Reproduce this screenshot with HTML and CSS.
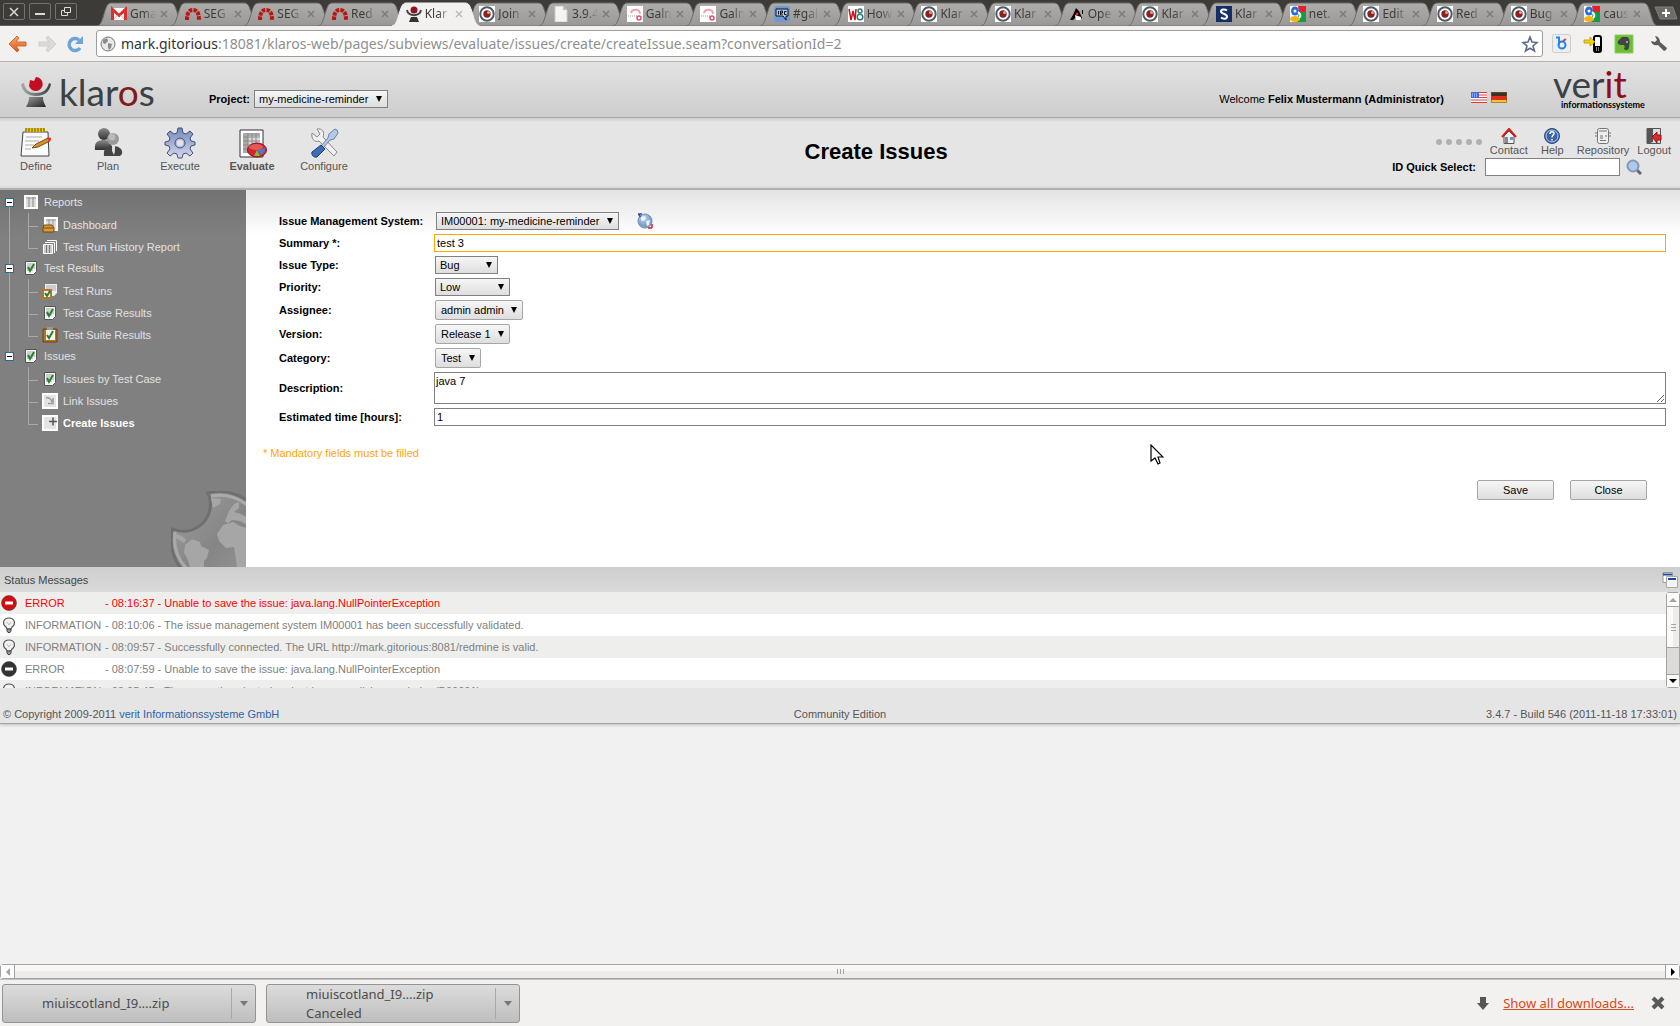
FILE: index.html
```html
<!DOCTYPE html>
<html lang="en">
<head>
  <meta charset="UTF-8">
  <title>Klaros - Create Issues</title>
  <link rel="stylesheet" href="styles.css">
</head>

<body>

  <!-- shared icon shapes -->
  <svg class="defs" width="0" height="0" aria-hidden="true">
    <defs>
      <linearGradient id="tabFill" x1="0" y1="0" x2="0" y2="1"><stop offset="0" stop-color="#aeadab"/><stop offset="1" stop-color="#999896"/></linearGradient>
      <linearGradient id="orange" x1="0" y1="0" x2="0" y2="1"><stop offset="0" stop-color="#f9a96b"/><stop offset="1" stop-color="#d9591c"/></linearGradient>
      <linearGradient id="gear" x1="0" y1="0" x2="0" y2="1"><stop offset="0" stop-color="#6f8bb8"/><stop offset="1" stop-color="#d9d6f0"/></linearGradient>
      <linearGradient id="person" x1="0" y1="0" x2="0" y2="1"><stop offset="0" stop-color="#8a8a8a"/><stop offset="1" stop-color="#303030"/></linearGradient>
      <linearGradient id="stand" x1="0" y1="0" x2="1" y2="1"><stop offset="0" stop-color="#999"/><stop offset="1" stop-color="#222"/></linearGradient>
      <linearGradient id="arms" x1="0" y1="0" x2="1" y2="0"><stop offset="0" stop-color="#a8a8a8"/><stop offset="1" stop-color="#3c4144"/></linearGradient>
      <radialGradient id="ball" cx="40%" cy="30%"><stop offset="0" stop-color="#c8d8ee"/><stop offset="1" stop-color="#7f9fc8"/></radialGradient>
      <linearGradient id="globeFill" x1="0" y1="0" x2="1" y2="1"><stop offset="0" stop-color="#a0a0a0"/><stop offset="0.5" stop-color="#858585"/><stop offset="1" stop-color="#9a9a9a"/></linearGradient>
    </defs>

    <symbol id="tab" viewBox="0 0 88 24" preserveAspectRatio="none">
      <path d="M0 24C4 23 5 19 8 9C10 3 11 1 15 1H73C77 1 78 3 80 9C83 19 84 23 88 24Z"/>
    </symbol>
    <symbol id="x" viewBox="0 0 8 8"><path d="M1 1L7 7M7 1L1 7" fill="none" stroke="currentColor" stroke-width="1.5"/></symbol>

    <symbol id="fav-gmail" viewBox="0 0 16 16"><path d="M0 2h16v12H0z" fill="#fff"/><path d="M1.500 14V3.500L8 9.500l6.500-6V14" fill="none" stroke="#d8322c" stroke-width="3"/><path d="M3 13l3.500-4M13 13L9.500 9" stroke="#e4aaa8" fill="none"/></symbol>
    <symbol id="fav-redmine" viewBox="0 0 16 16"><path d="M2 14C2 7 4 4 8 4s6 3 6 10" fill="none" stroke="#bb1512" stroke-width="4" stroke-dasharray="3.500 1"/></symbol>
    <symbol id="fav-klaros" viewBox="0 0 16 16"><path d="M1 4C2 11 14 11 15 4" fill="none" stroke="#444" stroke-width="2"/><circle cx="8" cy="4" r="3.500" fill="#8d1420"/><path d="M5 11h6l2 5H3z" fill="#333"/></symbol>
    <symbol id="fav-eye" viewBox="0 0 16 16"><path d="M0 0h16v16H0z" fill="#fff"/><circle cx="8" cy="8" r="6.700" fill="#fff" stroke="#4c5c66" stroke-width="2"/><circle cx="8" cy="8" r="3.700" fill="#8b211c"/><circle cx="9.500" cy="6.500" r="1.500" fill="#d9a49f"/></symbol>
    <symbol id="fav-page" viewBox="0 0 16 16"><path d="M2 0h8l4 4v12H2z" fill="#f4f4f4" stroke="#ccc"/><path d="M10 0v4h4z" fill="#bbb"/></symbol>
    <symbol id="fav-galn" viewBox="0 0 16 16"><path d="M0 0h16v16H0z" fill="#fff"/><path d="M4 7c1-5 9-4 9 1" fill="none" stroke="#f2a5ac" stroke-width="2"/><path d="M1 10h9" stroke="#ccc" stroke-width="2" stroke-dasharray="1 1"/><circle cx="12" cy="12" r="2" fill="none" stroke="#e0506c" stroke-width="1.500"/></symbol>
    <symbol id="fav-irc" viewBox="0 0 16 16"><rect width="16" height="16" rx="3" fill="#6f9ad3"/><path d="M2 3h12v7h-2v4l-3-4H2z" fill="#a9c8ee" stroke="#111"/><path d="M4.500 5v3.500M6.500 9V5h2v2h-2l2 2M12.500 5.500h-2v3h2" fill="none" stroke="#111"/></symbol>
    <symbol id="fav-w8" viewBox="0 0 16 16"><path d="M0 0h16v16H0z" fill="#fff"/><path d="M1 3l2 11 2-9 2 9 1-11" fill="none" stroke="#c4161c" stroke-width="1.500"/><circle cx="12" cy="5" r="2" fill="none" stroke="#2b7a7c" stroke-width="1.500"/><circle cx="12" cy="11" r="2.800" fill="none" stroke="#2b7a7c" stroke-width="1.500"/></symbol>
    <symbol id="fav-duke" viewBox="0 0 16 16"><path d="M7 2l3 3 3 7-2 1H8l-1-2-3 3H1l3-5z" fill="#000"/><path d="M6 9l3 1 3 1v3H7z" fill="#fff"/><circle cx="8" cy="8" r="1.500" fill="#e22"/><path d="M13.500 4v4" stroke="#000"/></symbol>
    <symbol id="fav-s" viewBox="0 0 16 16"><path d="M0 0h16v16H0z" fill="#152f66"/><path d="M11 4.500C9 3 5 3 5 5.500s6 2 6 5S7 13 5 11.500" fill="none" stroke="#fff" stroke-width="2"/></symbol>
    <symbol id="fav-google" viewBox="0 0 16 16"><path d="M0 0h16v16H0z" fill="#fff"/><path d="M8 0h8v6H9z" fill="#ee1c24"/><path d="M9 6h7v10H7z" fill="#149b48"/><ellipse cx="5" cy="5" rx="4" ry="4.500" fill="#2a6bd4"/><circle cx="5" cy="5" r="1.500" fill="#fff"/><ellipse cx="5" cy="13" rx="5" ry="3" fill="#f5b219"/><path d="M8 6c3 2 3 4 1 6" stroke="#fff" stroke-width="2" fill="none"/></symbol>

    <symbol id="ic-table" viewBox="0 0 16 16"><path d="M2 2h12v12H2z" fill="#ddd" stroke="#fff" stroke-width="2"/><path d="M3 4h10" stroke="#999"/><path d="M6 3v10M10 3v10" stroke="#888"/></symbol>
    <symbol id="ic-dash" viewBox="0 0 16 16"><path d="M3 1h12v12H3z" fill="#ddd" stroke="#fff" stroke-width="2"/><path d="M4 3h10M7 2v10M11 2v10" stroke="#999"/><path d="M2 8h8l2 3v4H1v-4z" fill="#d99c3c" stroke="#744806"/><path d="M2 11h9" stroke="#744806"/></symbol>
    <symbol id="ic-history" viewBox="0 0 16 16"><path d="M5 1.500h9.500V12" fill="none" stroke="#fff"/><path d="M3 3.500h9.500V14" fill="none" stroke="#fff"/><path d="M1.500 5.500h9v9h-9z" fill="#ccc" stroke="#fff"/><path d="M4.500 6v8M7.500 6v8" stroke="#777"/></symbol>
    <symbol id="ic-check" viewBox="0 0 16 16"><path d="M2.500 1.500h11v10l-3 3h-8z" fill="#f4f4f4" stroke="#555"/><path d="M4 4h8M4 6h8M4 8h8M4 10h6" stroke="#aaa"/><path d="M5 7l2 4 4-7" fill="none" stroke="#27802a" stroke-width="2"/></symbol>
    <symbol id="ic-runs" viewBox="0 0 16 16"><path d="M3 1h12v9l-3 3H3z" fill="#eee"/><path d="M4 3h10M4 5h10M4 7h10" stroke="#aaa"/><path d="M1 7h8v8H1z" fill="#f4f4f4" stroke="#b07828" stroke-width="2"/><path d="M3 10l2 3 3-5" fill="none" stroke="#27802a" stroke-width="2"/></symbol>
    <symbol id="ic-suite" viewBox="0 0 16 16"><path d="M1 2h14v13H1z" fill="#b8741a" stroke="#6e430a"/><path d="M4 3h9v10H4z" fill="#f4f4f4"/><path d="M5 0h6v3H5z" fill="#999"/><path d="M5 8l2 3 4-7" fill="none" stroke="#27802a" stroke-width="2"/></symbol>
    <symbol id="ic-link" viewBox="0 0 16 16"><path d="M1 1h14v14H1z" fill="#e4e4e4" stroke="#fff" stroke-width="2"/><path d="M4 5c3-1 5 1 6 4M11 5v5.500H6" fill="none" stroke="#999" stroke-width="1.500"/></symbol>
    <symbol id="ic-plus" viewBox="0 0 16 16"><path d="M1 1h14v14H1z" fill="#e4e4e4" stroke="#fff" stroke-width="2"/><path d="M7 6.500h8M11 2.500v8" stroke="#555" stroke-width="1.500"/></symbol>
    <symbol id="ic-bulb" viewBox="0 0 16 16"><path d="M5 10C1 7 2 1 8 1s7 6 3 9l-1 2H6z" fill="#f2f2f2" stroke="#555" stroke-width="1.200"/><path d="M6 5l2 3 2-3" fill="none" stroke="#bbb"/><path d="M6 12h4v2l-1 1.500H7L6 14z" fill="#999" stroke="#444"/></symbol>
    <symbol id="ic-stop" viewBox="0 0 16 16"><circle cx="8" cy="8" r="7.500" fill="currentColor" stroke="#333" stroke-opacity="0.5"/><path d="M4 6.500h8v3H4z" fill="#fff"/></symbol>
  </svg>

  <!-- tab strip -->
  <div class="tabstrip">
    <div class="win-buttons">
      <button type="button" aria-label="Close window"><svg width="10" height="10" viewBox="0 0 10 10"><path d="M1 1l8 8M9 1l-8 8" stroke="#dfdbd2" stroke-width="1.500"/></svg></button>
      <button type="button" aria-label="Minimize"><svg width="10" height="10" viewBox="0 0 10 10"><path d="M0 7h10" stroke="#dfdbd2" stroke-width="2"/></svg></button>
      <button type="button" aria-label="Restore"><svg width="10" height="10" viewBox="0 0 10 10"><path d="M3.500 .5h6v5h-6zM3 3.500H.500v5h6V6" fill="none" stroke="#dfdbd2"/></svg></button>
    </div>
    <div class="tabs">
      <a class="tab" href="#"><svg class="shape"><use href="#tab"/></svg><svg class="fav"><use href="#fav-gmail"/></svg><span>Gma</span><svg class="x"><use href="#x"/></svg></a>
      <a class="tab" href="#"><svg class="shape"><use href="#tab"/></svg><svg class="fav"><use href="#fav-redmine"/></svg><span>SEG</span><svg class="x"><use href="#x"/></svg></a>
      <a class="tab" href="#"><svg class="shape"><use href="#tab"/></svg><svg class="fav"><use href="#fav-redmine"/></svg><span>SEG</span><svg class="x"><use href="#x"/></svg></a>
      <a class="tab" href="#"><svg class="shape"><use href="#tab"/></svg><svg class="fav"><use href="#fav-redmine"/></svg><span>Red</span><svg class="x"><use href="#x"/></svg></a>
      <a class="tab active" href="#"><svg class="shape"><use href="#tab"/></svg><svg class="fav"><use href="#fav-klaros"/></svg><span>Klar</span><svg class="x"><use href="#x"/></svg></a>
      <a class="tab" href="#"><svg class="shape"><use href="#tab"/></svg><svg class="fav"><use href="#fav-eye"/></svg><span>Join</span><svg class="x"><use href="#x"/></svg></a>
      <a class="tab" href="#"><svg class="shape"><use href="#tab"/></svg><svg class="fav"><use href="#fav-page"/></svg><span>3.9.4</span><svg class="x"><use href="#x"/></svg></a>
      <a class="tab" href="#"><svg class="shape"><use href="#tab"/></svg><svg class="fav"><use href="#fav-galn"/></svg><span>Galn</span><svg class="x"><use href="#x"/></svg></a>
      <a class="tab" href="#"><svg class="shape"><use href="#tab"/></svg><svg class="fav"><use href="#fav-galn"/></svg><span>Galn</span><svg class="x"><use href="#x"/></svg></a>
      <a class="tab" href="#"><svg class="shape"><use href="#tab"/></svg><svg class="fav"><use href="#fav-irc"/></svg><span>#gal</span><svg class="x"><use href="#x"/></svg></a>
      <a class="tab" href="#"><svg class="shape"><use href="#tab"/></svg><svg class="fav"><use href="#fav-w8"/></svg><span>How</span><svg class="x"><use href="#x"/></svg></a>
      <a class="tab" href="#"><svg class="shape"><use href="#tab"/></svg><svg class="fav"><use href="#fav-eye"/></svg><span>Klar</span><svg class="x"><use href="#x"/></svg></a>
      <a class="tab" href="#"><svg class="shape"><use href="#tab"/></svg><svg class="fav"><use href="#fav-eye"/></svg><span>Klar</span><svg class="x"><use href="#x"/></svg></a>
      <a class="tab" href="#"><svg class="shape"><use href="#tab"/></svg><svg class="fav"><use href="#fav-duke"/></svg><span>Ope</span><svg class="x"><use href="#x"/></svg></a>
      <a class="tab" href="#"><svg class="shape"><use href="#tab"/></svg><svg class="fav"><use href="#fav-eye"/></svg><span>Klar</span><svg class="x"><use href="#x"/></svg></a>
      <a class="tab" href="#"><svg class="shape"><use href="#tab"/></svg><svg class="fav"><use href="#fav-s"/></svg><span>Klar</span><svg class="x"><use href="#x"/></svg></a>
      <a class="tab" href="#"><svg class="shape"><use href="#tab"/></svg><svg class="fav"><use href="#fav-google"/></svg><span>net.</span><svg class="x"><use href="#x"/></svg></a>
      <a class="tab" href="#"><svg class="shape"><use href="#tab"/></svg><svg class="fav"><use href="#fav-eye"/></svg><span>Edit</span><svg class="x"><use href="#x"/></svg></a>
      <a class="tab" href="#"><svg class="shape"><use href="#tab"/></svg><svg class="fav"><use href="#fav-eye"/></svg><span>Red</span><svg class="x"><use href="#x"/></svg></a>
      <a class="tab" href="#"><svg class="shape"><use href="#tab"/></svg><svg class="fav"><use href="#fav-eye"/></svg><span>Bug</span><svg class="x"><use href="#x"/></svg></a>
      <a class="tab" href="#"><svg class="shape"><use href="#tab"/></svg><svg class="fav"><use href="#fav-google"/></svg><span>caus</span><svg class="x"><use href="#x"/></svg></a>
    </div>
    <button type="button" class="new-tab" aria-label="New tab"><svg width="24" height="14" viewBox="0 0 24 14"><path d="M1 1h18l4 12H6z" fill="#6d6c69" stroke="#807f7b"/><path d="M12 3v8M8 7h8" stroke="#fff" stroke-width="2"/></svg></button>
  </div>

  <!-- toolbar -->
  <div class="toolbar">
    <button type="button" class="tool" aria-label="Back"><svg width="20" height="18" viewBox="0 0 20 18"><path d="M1 9l8-8 2 2-3 4h10v4H8l3 4-2 2z" fill="url(#orange)" stroke="#cf6a35"/></svg></button>
    <button type="button" class="tool" aria-label="Forward"><svg width="20" height="18" viewBox="0 0 20 18"><path d="M19 9l-8-8-2 2 3 4H2v4h10l-3 4 2 2z" fill="#dcdad8" stroke="#cfcdcb"/></svg></button>
    <button type="button" class="tool" aria-label="Reload"><svg width="18" height="18" viewBox="0 0 18 18"><path d="M14 13a6 6 0 1 1-1-8" fill="none" stroke="#6fa3d8" stroke-width="3.500"/><path d="M17 1v8H9z" fill="#6fa3d8"/></svg></button>
    <div class="omnibox">
      <svg width="16" height="16" viewBox="0 0 16 16"><circle cx="8" cy="8" r="7" fill="#e8e8e8" stroke="#777"/><path d="M3 4l4-2 1 3-3 3-2-1zM8 7l4 1-1 4-2 2-1-3z" fill="#8a8a8a"/></svg>
      <div class="url"><b>mark.gitorious</b>:18081/klaros-web/pages/subviews/evaluate/issues/create/createIssue.seam?conversationId=2</div>
      <svg width="18" height="18" viewBox="0 0 18 18"><path d="M9 2l2 5 5 .5-4 3.500 1.500 5L9 13.200 4.500 16 6 11 2 7.500 7 7z" fill="#fff" stroke="#5f6b86" stroke-width="1.600"/></svg>
    </div>
    <div class="extensions">
      <svg width="20" height="20" viewBox="0 0 20 20"><rect x=".5" y=".5" width="18" height="18" rx="2" fill="#eee" stroke="#ccc"/><path d="M4 3.500h3V11" fill="none" stroke="#1e88e5" stroke-width="2"/><circle cx="10" cy="11" r="3.500" fill="none" stroke="#1e88e5" stroke-width="2"/><path d="M11 7l3-2" stroke="#e33" stroke-width="2"/></svg>
      <svg width="20" height="20" viewBox="0 0 20 20"><rect x="11" y="2" width="7" height="16" rx="2" fill="#fff" stroke="#000" stroke-width="2"/><path d="M11 12h7v6h-7z" fill="#000"/><path d="M13 14h1M15 14h1M13 16h1M15 16h1" stroke="#fff"/><path d="M1 6h6V3l5 5-5 4V9H1z" fill="#f7d40a" stroke="#a98e00" stroke-width=".7"/></svg>
      <svg width="20" height="20" viewBox="0 0 20 20"><path d="M1 1h18v18H1z" fill="#6abf36" stroke="#8bce60"/><path d="M4 7l4-4h5c3 1 3 5 2 10 0 4-5 4-5 1l1-1-1-2H8c-3 0-5-1-4-4z" fill="#444"/><circle cx="13" cy="8" r="1" fill="#bbb"/></svg>
      <svg class="wrench" width="18" height="18" viewBox="0 0 18 18"><path d="M1 6c1 4 4 5 7 4l6 6 2-1 1-2-7-6c0-3-2-6-5-6l2 4-2 2z" fill="#5c5b58"/></svg>
    </div>
  </div>

  <div class="page">

    <!-- brand header -->
    <header class="brand">
      <svg class="klaros-logo" width="150" height="38" viewBox="0 0 150 38" role="img" aria-label="klaros">
        <path d="M2 8C3 15 8 20 17 20S31 15 32 8l-2-1C28 14 24 17 17 17S6 14 5 7z" fill="url(#arms)"/>
        <path d="M10 21h14c0 4 1 6 3 10H7c2-4 3-6 3-10z" fill="url(#stand)"/>
        <path d="M11 4l4 1 2-4a7 7 0 1 1-7 9z" fill="#c00f1f"/>
        <text x="40" y="30" class="logo-text">klar<tspan fill="#7e1c1c">o</tspan>s</text>
      </svg>
      <div class="project">
        <label for="project">Project:</label>
        <span class="select"><select id="project"><option>my-medicine-reminder</option></select></span>
      </div>
      <div class="welcome">Welcome <b>Felix Mustermann (Administrator)</b></div>
      <div class="flags">
        <a href="#" aria-label="English"><svg width="16" height="11" viewBox="0 0 16 11"><path d="M0 0h16v11H0z" fill="#fff"/><path d="M0 .5h16M0 3h16M0 5.500h16M0 8h16M0 10.500h16" stroke="#e33a36"/><path d="M0 0h8v6H0z" fill="#3e6fd9"/><path d="M1 2h6M1 4h6" stroke="#cfe0ff" stroke-dasharray="1 1"/></svg></a>
        <a href="#" aria-label="Deutsch"><svg width="16" height="11" viewBox="0 0 16 11"><path d="M0 0h16v4H0z" fill="#3c3222"/><path d="M0 4h16v4H0z" fill="#e32d1c"/><path d="M0 8h16v3H0z" fill="#f0c83c"/><path d="M.5.5h15v10H.5z" fill="none" stroke="#765c1c" stroke-opacity=".6"/></svg></a>
      </div>
      <svg class="verit-logo" width="98" height="44" viewBox="0 0 98 44" role="img" aria-label="verit informationssysteme">
        <text x="0" y="30" class="logo-text">ver<tspan fill="#8f0f16">it</tspan></text>
        <text x="8" y="40" class="logo-sub">informationssysteme</text>
      </svg>
    </header>

    <!-- main navigation -->
    <div class="navbar">
      <nav class="modules">
        <a href="#"><svg width="32" height="32" viewBox="0 0 32 32"><path d="M3 5h25l1 24H1z" fill="#fafafa" stroke="#444"/><path d="M5 1h20v4H5z" fill="#e9c71b"/><path d="M6 1v4M9 1v4M12 1v4M15 1v4M18 1v4M21 1v4M24 1v4" stroke="#6b5600"/><path d="M6 10h16M5 14h14M5 18h9M5 22h6" stroke="#aaa"/><path d="M12 21l4-4 12-6 2 3-12 6z" fill="#d7902c" stroke="#7a4d10"/><path d="M28 10l3 1v2l-2 2-2-4z" fill="#e33"/></svg>Define</a>
        <a href="#"><svg width="32" height="32" viewBox="0 0 32 32"><circle cx="12" cy="7" r="6" fill="url(#person)"/><path d="M3 23c-1-8 3-10 9-10s8 3 8 10z" fill="url(#person)"/><path d="M12 29c-1-8 3-10 9-10s10 3 9 8l-2 2z" fill="#444"/><circle cx="21" cy="12" r="6" fill="#999"/><circle cx="20" cy="10" r="3.500" fill="#bbb"/><path d="M20 19h3l0 5-1 4-2-4z" fill="#ddd"/></svg>Plan</a>
        <a href="#"><svg width="32" height="32" viewBox="0 0 32 32"><path d="M14 1h4l1 5 3 1 4-3 3 3-3 4 1 3 4 1v3l-4 1-1 3 3 4-3 3-4-3-3 1-1 4h-4l-1-4-3-1-4 3-3-3 3-4-1-3-4-1v-3l4-1 1-3-3-4 3-3 4 3 3-1z" fill="url(#gear)" stroke="#464f7c"/><circle cx="16" cy="16" r="5" fill="#b9bcdc" stroke="#464f7c"/><circle cx="16" cy="16" r="3" fill="#e5e5e5"/></svg>Execute</a>
        <a class="current" href="#"><svg width="32" height="32" viewBox="0 0 32 32"><path d="M4 3h23v27H4z" fill="#fff" stroke="#333"/><path d="M7 6h17v20H7z" fill="#ddd"/><path d="M7 6h5v20H7zM7 6h17v3H7z" fill="#aaa"/><path d="M7 10h17M7 14h17M7 18h17M7 22h17M12 6v20M16 6v20M20 6v20" stroke="#888"/><ellipse cx="21" cy="23" rx="9.500" ry="7" fill="#d8232a" stroke="#8a1015"/><path d="M21 23l8-2c0 4-1 5-4 7z" fill="#4a7ac8"/><path d="M21 23l3 6h-6z" fill="#7ac142"/><ellipse cx="20" cy="20" rx="7" ry="3" fill="#ee7b7c" opacity=".6"/></svg>Evaluate</a>
        <a href="#"><svg width="32" height="32" viewBox="0 0 32 32"><path d="M4 6l5 4 3-3-3-5c5-1 8 3 6 8l14 15-3 4-15-15C6 16 3 11 4 6z" fill="#f0f0f0" stroke="#888"/><path d="M29 3l-2-1-6 5-1 4-7 8 2 2 7-8 4-1 4-6z" fill="#b6c9e4" stroke="#6681a8"/><path d="M13 18l4 4-8 8c-3 1-6-2-5-5z" fill="#3d6db5" stroke="#1f3d78"/></svg>Configure</a>
      </nav>
      <h1>Create Issues</h1>
      <div class="tools">
        <div class="tool-links">
          <div class="dots"><i></i><i></i><i></i><i></i><i></i></div>
          <a href="#"><svg width="16" height="16" viewBox="0 0 16 16"><path d="M3 8v7.500h10V8L8 3z" fill="#eee" stroke="#555"/><path d="M1 9l7-8 7 8" fill="none" stroke="#cf1b1b" stroke-width="2"/><path d="M4 9h3v6H4z" fill="#888"/><path d="M9 9h3v3H9z" fill="#6b93c9"/></svg>Contact</a>
          <a href="#"><svg width="16" height="16" viewBox="0 0 16 16"><circle cx="8" cy="8" r="7.500" fill="#3a64a8" stroke="#2a4680"/><circle cx="8" cy="8" r="6" fill="none" stroke="#b9cbe6"/><path d="M6 6c0-3 4-3 4-.5C10 7 8 7 8 9.500M8 11v1.500" fill="none" stroke="#fff" stroke-width="1.500"/></svg>Help</a>
          <a href="#"><svg width="16" height="16" viewBox="0 0 16 16"><rect x="2.500" y=".5" width="11" height="15" rx="2" fill="#eee" stroke="#777"/><path d="M4 3h8M5 8h3M10 8h2M5 10h3M5 12.500h6M0 5h2M0 8h2M14 5h2M14 8h2" stroke="#777"/></svg>Repository</a>
          <a href="#"><svg width="16" height="16" viewBox="0 0 16 16"><path d="M1 .5h13.500v15H1z" fill="#ddd" stroke="#555"/><path d="M1 1h6v13l-3 1H1z" fill="#555"/><path d="M6 9l5-5v3h4v5h-4v3z" fill="#d62b30" stroke="#9c1317"/></svg>Logout</a>
        </div>
        <form class="quick">
          <label for="quick">ID Quick Select:</label>
          <input type="text" id="quick">
          <button type="button" class="icon-btn" aria-label="Search"><svg width="16" height="16" viewBox="0 0 16 16"><path d="M11 11l4 4" stroke="#666" stroke-width="3"/><circle cx="7" cy="7" r="5.500" fill="#a9cbf2" stroke="#8a98ac" stroke-width="2"/></svg></button>
        </form>
      </div>
    </div>

    <div class="body">

      <!-- tree menu -->
      <aside class="sidebar">
        <ul class="tree">
          <li>
            <a class="group" href="#"><i class="toggle"></i><svg><use href="#ic-table"/></svg>Reports</a>
            <ul>
              <li><a href="#"><svg><use href="#ic-dash"/></svg>Dashboard</a></li>
              <li><a href="#"><svg><use href="#ic-history"/></svg>Test Run History Report</a></li>
            </ul>
          </li>
          <li>
            <a class="group" href="#"><i class="toggle"></i><svg><use href="#ic-check"/></svg>Test Results</a>
            <ul>
              <li><a href="#"><svg><use href="#ic-runs"/></svg>Test Runs</a></li>
              <li><a href="#"><svg><use href="#ic-check"/></svg>Test Case Results</a></li>
              <li><a href="#"><svg><use href="#ic-suite"/></svg>Test Suite Results</a></li>
            </ul>
          </li>
          <li>
            <a class="group" href="#"><i class="toggle"></i><svg><use href="#ic-check"/></svg>Issues</a>
            <ul>
              <li><a href="#"><svg><use href="#ic-check"/></svg>Issues by Test Case</a></li>
              <li><a href="#"><svg><use href="#ic-link"/></svg>Link Issues</a></li>
              <li><a class="selected" href="#"><svg><use href="#ic-plus"/></svg>Create Issues</a></li>
            </ul>
          </li>
        </ul>
        <svg class="globe" width="75" height="76" viewBox="0 0 75 76">
          <path d="M37 2A48 48 0 1 1 1.500 38A27 27 0 0 0 37 2z" fill="url(#globeFill)" stroke="#6f6f6f" stroke-width="3"/>
          <path d="M40 5A45 45 0 0 1 76 14M4 41A45 45 0 0 0 16 78" fill="none" stroke="#aaa" stroke-width="3"/>
          <path d="M40 7l10 1-1 5-7 4zM5 43l6 2 4 4-2 3-8-5zM14 54l7-6 8 3 1 4 8 4-2 8-3 3v6H19l-2-7-4-7zM58 20l5-7 5-2v6l-5 4 7 2 5 3v7l-6-3-8-1-4 3-3-2zM52 34l10-3 7 4 6 2v39h-9l-3-20-8 1-7-7-2-7z" fill="#a6a6a6"/>
        </svg>
      </aside>

      <!-- issue form -->
      <main class="content">
        <form class="issue">
          <label for="ims">Issue Management System:</label>
          <div class="field ims">
            <span class="select"><select id="ims"><option>IM00001: my-medicine-reminder</option></select></span>
            <button type="button" class="icon-btn" aria-label="Validate"><svg width="16" height="16" viewBox="0 0 16 16"><circle cx="8" cy="8" r="7" fill="url(#ball)" stroke="#6f8fb5"/><path d="M4 4l4-1 1 3-3 2-2-1zM9 8l4-1-1 5-2 1z" fill="#eef4fb"/><path d="M1 1h4M1.500 1l2 3" stroke="#2f4f9c" stroke-width="1.500"/><path d="M11 15h4M15 11v4" fill="none" stroke="#d0202a" stroke-width="1.500"/></svg></button>
          </div>

          <label for="summary">Summary *:</label>
          <input type="text" id="summary" class="required" value="test 3">

          <label for="type">Issue Type:</label>
          <div class="field"><span class="select type"><select id="type"><option>Bug</option></select></span></div>

          <label for="priority">Priority:</label>
          <div class="field"><span class="select priority"><select id="priority"><option>Low</option></select></span></div>

          <label for="assignee">Assignee:</label>
          <div class="field"><span class="select soft"><select id="assignee"><option>admin admin</option></select></span></div>

          <label for="version">Version:</label>
          <div class="field"><span class="select soft"><select id="version"><option>Release 1</option></select></span></div>

          <label for="category">Category:</label>
          <div class="field"><span class="select soft"><select id="category"><option>Test</option></select></span></div>

          <label for="description">Description:</label>
          <textarea id="description">java 7</textarea>

          <label for="time">Estimated time [hours]:</label>
          <input type="text" id="time" value="1">
        </form>

        <p class="mandatory">* Mandatory fields must be filled</p>

        <div class="actions">
          <button type="button">Save</button>
          <button type="button">Close</button>
        </div>

        <svg class="cursor" width="14" height="22" viewBox="0 0 14 22"><path d="M1 1v16l4-3 3 6 2-1-2-6h5z" fill="#fff" stroke="#000" stroke-width="1.200"/></svg>
      </main>
    </div>

    <!-- status messages -->
    <section class="status">
      <div class="status-head">
        <h2>Status Messages</h2>
        <button type="button" class="icon-btn" aria-label="Open in window"><svg width="16" height="16" viewBox="0 0 16 16"><path d="M1 .5h9.500v10H1z" fill="#fff" stroke="#999"/><path d="M1 2.500h9" stroke="#1f4a94" stroke-width="2"/><path d="M4.500 4.500h11v11h-11z" fill="#f4f4f4" stroke="#aaa"/><path d="M6 7h8" stroke="#1f4a94" stroke-width="2"/></svg></button>
      </div>
      <div class="status-body">
        <ul class="messages">
          <li class="new"><svg><use href="#ic-stop"/></svg><span>ERROR</span>- 08:16:37 - Unable to save the issue: java.lang.NullPointerException</li>
          <li><svg><use href="#ic-bulb"/></svg><span>INFORMATION</span>- 08:10:06 - The issue management system IM00001 has been successfully validated.</li>
          <li><svg><use href="#ic-bulb"/></svg><span>INFORMATION</span>- 08:09:57 - Successfully connected. The URL http://mark.gitorious:8081/redmine is valid.</li>
          <li class="old-error"><svg><use href="#ic-stop"/></svg><span>ERROR</span>- 08:07:59 - Unable to save the issue: java.lang.NullPointerException</li>
          <li><svg><use href="#ic-bulb"/></svg><span>INFORMATION</span>- 08:05:45 - The currently selected project is my-medicine-reminder (P00001).</li>
        </ul>
        <div class="vscroll">
          <i class="btn up"></i>
          <i class="thumb"></i>
          <i class="track"></i>
          <i class="btn down"></i>
        </div>
      </div>
    </section>

    <footer class="footer">
      <span>© Copyright 2009-2011 <a href="#">verit Informationssysteme GmbH</a></span>
      <span>Community Edition</span>
      <span>3.4.7 - Build 546 (2011-11-18 17:33:01)</span>
    </footer>
  </div>

  <div class="hscroll">
    <i class="btn left"></i>
    <i class="thumb"></i>
    <i class="btn right"></i>
  </div>

  <!-- downloads -->
  <div class="downloads">
    <div class="download">
      <button type="button" class="file">miuiscotland_I9….zip</button>
      <button type="button" class="more" aria-label="Options"></button>
    </div>
    <div class="download">
      <button type="button" class="file">miuiscotland_I9….zip<br>Canceled</button>
      <button type="button" class="more" aria-label="Options"></button>
    </div>
    <div class="show-all">
      <svg width="12" height="13" viewBox="0 0 12 13"><path d="M3 0h6v6h3l-6 7-6-7h3z" fill="#555"/></svg>
      <a href="#">Show all downloads...</a>
      <button type="button" class="icon-btn" aria-label="Close downloads"><svg width="14" height="14" viewBox="0 0 14 14"><path d="M2 2l10 10M12 2l-10 10" stroke="#5a5a58" stroke-width="4"/></svg></button>
    </div>
  </div>

</body>
</html>
```
FILE: styles.css
```css
* {
  box-sizing: border-box;
}

body {
  display: flex;
  flex-direction: column;
  min-height: 100vh;
  margin: 0;
  font-family: "Liberation Sans", Arial, sans-serif;
  font-size: 11px;
  color: #000;
  background: #f1f1f1;
}

a {
  color: inherit;
  text-decoration: none;
}

ul {
  list-style: none;
  margin: 0;
  padding: 0;
}

button, input, select, textarea {
  font: inherit;
  color: inherit;
  margin: 0;
}

svg {
  display: block;
  flex: none;
}

.defs {
  position: absolute;
}

.icon-btn, .tool, .new-tab {
  padding: 0;
  border: none;
  background: none;
}

/* tab strip */
.tabstrip {
  display: flex;
  height: 26px;
  background: #3c3b37;
  border-bottom: 1px solid #62615e;
  font-family: "Noto Sans", sans-serif;
  font-size: 12px;
}

.win-buttons {
  display: flex;
  gap: 4px;
  padding: 3px 27px 0 3px;
}

.win-buttons button {
  display: flex;
  align-items: center;
  justify-content: center;
  width: 22px;
  height: 17px;
  padding: 0;
  border: 1px solid #73726c;
  border-radius: 2px;
  background: #3c3b37;
}

.tabs {
  display: flex;
  flex: 1;
  padding-top: 2px;
}

.tab {
  position: relative;
  display: flex;
  flex: 1;
  align-items: center;
  padding-left: 7px;
  min-width: 0;
  color: #3c3b37;
}

.tab .shape {
  position: absolute;
  left: -7px;
  top: 0;
  width: calc(100% + 14px);
  height: 24px;
  overflow: visible;
  fill: url(#tabFill);
  stroke: #6b6a67;
}

.tab.active {
  z-index: 1;
}

.tab.active .shape {
  fill: #f2f1f0;
  stroke: #f2f1f0;
}

.tab .fav {
  position: relative;
  width: 16px;
  height: 16px;
}

.tab span {
  position: relative;
  width: 26px;
  margin-left: 3px;
  overflow: hidden;
  white-space: nowrap;
  -webkit-mask-image: linear-gradient(to right, #000 50%, transparent);
  mask-image: linear-gradient(to right, #000 50%, transparent);
}

.tab .x {
  position: relative;
  width: 8px;
  height: 8px;
  margin-left: 4px;
  color: #7d7c79;
}

.tab.active .x {
  color: #bbb;
}

.new-tab {
  width: 29px;
  padding: 0 2px 0 3px;
}

/* toolbar */
.toolbar {
  display: flex;
  align-items: center;
  height: 36px;
  padding-left: 8px;
  background: #f2f1f0;
  border-bottom: 1px solid #b6b4b2;
}

.tool {
  margin-right: 9px;
}

.omnibox {
  display: flex;
  flex: 1;
  align-items: center;
  height: 27px;
  padding: 0 3px;
  margin-left: 3px;
  border: 1px solid #a09d9a;
  border-radius: 3px;
  background: #fff;
}

.url {
  flex: 1;
  padding-left: 5px;
  font-family: "Noto Sans", sans-serif;
  font-size: 14px;
  color: #8f8f8f;
}

.url b {
  font-weight: normal;
  color: #333;
}

.extensions {
  display: flex;
  align-items: center;
  gap: 11px;
  padding: 0 12px 0 9px;
}

.wrench {
  margin-left: 5px;
}

/* brand header */
.page {
  flex: 1;
}

.brand {
  display: flex;
  align-items: flex-end;
  height: 56px;
  padding: 0 29px 9px 19px;
  background: linear-gradient(#e3e3e3, #cdcdcd);
  border-bottom: 1px solid #a5a5a5;
}

.logo-text {
  font-family: Lato, sans-serif;
  font-size: 37px;
  fill: #3c4144;
}

.logo-sub {
  font-family: Lato, sans-serif;
  font-size: 9px;
  font-weight: bold;
}

.klaros-logo {
  margin-bottom: -6px;
}

.verit-logo {
  margin-bottom: -4px;
  overflow: visible;
}

.project {
  display: flex;
  align-items: center;
  gap: 4px;
  margin-left: 40px;
}

label {
  font-weight: bold;
}

.welcome {
  margin-left: auto;
  line-height: 18px;
}

.flags {
  display: flex;
  gap: 4px;
  margin: 0 46px 5px 27px;
}

/* drop-downs */
.select {
  position: relative;
  display: inline-block;
}

.select select {
  display: block;
  width: 100%;
  height: 18px;
  padding: 0 18px 0 4px;
  border: 1px solid #808080;
  border-radius: 0;
  background: linear-gradient(#f6f6f6, #dedede);
  appearance: none;
  -webkit-appearance: none;
}

.select::after {
  content: "";
  position: absolute;
  right: 6px;
  top: 6px;
  border: 3px solid transparent;
  border-top: 6px solid #000;
  border-bottom: none;
}

.select.soft select {
  height: 20px;
  padding-left: 5px;
  border-color: #a6a6a6;
  border-radius: 2px;
}

.select.soft::after {
  top: 7px;
}

.select.type {
  width: 63px;
}

.select.priority {
  width: 75px;
}

/* module navigation */
.navbar {
  display: flex;
  height: 72px;
  background: linear-gradient(#cfcfcf, #e5e5e5 4px, #e5e5e5 67px, #d8d8d8);
  border-bottom: 2px solid #b0b0b0;
  color: #555;
}

.modules {
  display: flex;
  padding-top: 9px;
}

.modules a {
  display: flex;
  flex-direction: column;
  align-items: center;
  gap: 1px;
  width: 72px;
}

.modules .current {
  font-weight: bold;
}

.navbar h1 {
  flex: 1;
  margin: 21px 0 0;
  font-size: 22px;
  line-height: 26px;
  text-align: center;
  color: #000;
}

.tools {
  padding: 10px 9px 0 0;
}

.tool-links {
  display: flex;
  justify-content: flex-end;
  gap: 8px;
}

.tool-links a {
  display: flex;
  flex-direction: column;
  align-items: center;
  min-width: 33px;
}

.dots {
  display: flex;
  gap: 4px;
  padding-top: 11px;
}

.dots i {
  width: 6px;
  height: 6px;
  border-radius: 50%;
  background: #b0b0b0;
}

.quick {
  display: flex;
  align-items: center;
  gap: 6px;
  margin-top: 2px;
  padding-right: 29px;
  color: #000;
}

.quick input {
  width: 135px;
  margin-left: 3px;
}

input[type="text"], textarea {
  height: 18px;
  padding: 0 2px;
  border: 1px solid #808080;
  background: #fff;
}

/* tree menu */
.body {
  display: flex;
  min-height: 377px;
}

.sidebar {
  position: relative;
  width: 246px;
  background: linear-gradient(#727272, #808080 46px);
  color: #e2e2e2;
}

.tree {
  padding-top: 1px;
}

.tree > li {
  position: relative;
}

.tree a {
  display: flex;
  align-items: center;
  height: 22px;
}

.tree svg {
  width: 16px;
  height: 16px;
}

.tree .group {
  padding-left: 5px;
}

.group svg {
  margin: 0 5px 0 9px;
}

.toggle {
  position: relative;
  z-index: 1;
  width: 9px;
  height: 9px;
  border: 1px solid #1f6f94;
  background: linear-gradient(#000, #000) center / 5px 1px no-repeat #fff;
}

/* line between the group toggles */
.tree > li:not(:last-child)::before {
  content: "";
  position: absolute;
  left: 9px;
  top: 11px;
  bottom: -11px;
  border-left: 1px solid #a8a8a8;
}

.tree ul {
  padding-left: 28px;
}

.tree ul li {
  position: relative;
}

.tree ul li::before {
  content: "";
  position: absolute;
  left: 0;
  top: 0;
  width: 9px;
  height: 13px;
  border-left: 1px solid #a8a8a8;
  border-bottom: 1px solid #a8a8a8;
}

.tree ul li:not(:last-child)::after {
  content: "";
  position: absolute;
  left: 0;
  top: 12px;
  bottom: 0;
  border-left: 1px solid #a8a8a8;
}

.tree ul a {
  gap: 5px;
  padding: 2px 0 0 14px;
}

.tree .selected {
  font-weight: bold;
  color: #fff;
}

.globe {
  position: absolute;
  right: 0;
  bottom: 0;
}

/* issue form */
.content {
  position: relative;
  flex: 1;
  padding: 22px 14px 0 17px;
  background: linear-gradient(#e4e4e4, #fff 46px);
}

.issue {
  display: grid;
  grid-template-columns: 155px 1fr;
  row-gap: 4px;
  align-items: center;
  padding-left: 16px;
}

.field {
  display: flex;
  padding-left: 1px;
}

.ims {
  gap: 18px;
  padding-left: 2px;
}

.issue .required {
  border-color: #ffa500;
}

textarea {
  display: block;
  height: 32px;
  padding: 1px;
  line-height: 14px;
}

.mandatory {
  margin: 20px 0;
  line-height: 14px;
  color: #ffa500;
}

.actions {
  display: flex;
  justify-content: flex-end;
  gap: 16px;
  padding-right: 19px;
}

.actions button {
  width: 77px;
  height: 20px;
  padding: 0;
  border: 1px solid #a6a6a6;
  border-radius: 2px;
  background: linear-gradient(#f6f6f6, #dedede);
}

.cursor {
  position: absolute;
  left: 904px;
  top: 254px;
}

/* status messages */
.status-head {
  display: flex;
  align-items: center;
  justify-content: space-between;
  height: 25px;
  padding: 0 2px 0 4px;
  background: linear-gradient(#cecece, #dadada);
}

.status-head h2 {
  margin: 0;
  font-size: 11px;
  font-weight: normal;
  color: #444;
}

.status-body {
  display: flex;
  height: 96px;
}

.messages {
  flex: 1;
  overflow: hidden;
  color: #808080;
}

.messages li {
  display: flex;
  align-items: center;
  height: 22px;
  padding-left: 1px;
  background: #fff;
}

.messages li:nth-child(odd) {
  background: #eeeeec;
}

.messages svg {
  width: 16px;
  height: 16px;
}

.messages span {
  width: 80px;
  margin-left: 8px;
}

.messages .new {
  color: #f00;
}

.messages .new svg {
  color: #d40d12;
}

.old-error svg {
  color: #333;
}

/* scroll bars */
.vscroll {
  display: flex;
  flex-direction: column;
  width: 14px;
  border: 1px solid #a5a3a0;
  border-radius: 3px;
  background: #dcdbda;
}

.vscroll .thumb {
  height: 42px;
  border: 1px solid #a5a3a0;
  border-width: 1px 0;
  background: linear-gradient(#a5a3a0, #a5a3a0) center 17px / 5px 1px no-repeat, linear-gradient(#a5a3a0, #a5a3a0) center 20px / 5px 1px no-repeat, linear-gradient(#a5a3a0, #a5a3a0) center 23px / 5px 1px no-repeat, linear-gradient(to right, #fafafa 50%, #edecea 50%);
}

.vscroll .track {
  flex: 1;
}

.btn {
  display: flex;
  align-items: center;
  justify-content: center;
  width: 13px;
  height: 13px;
  background: #fbfbfb;
}

.btn::after {
  content: "";
  border: 4px solid transparent;
}

.vscroll .btn {
  width: 12px;
}

.btn.up::after {
  border-top: none;
  border-bottom-color: #a5a3a0;
}

.btn.down::after {
  border-bottom: none;
  border-top-color: #000;
}

.vscroll .down {
  border-top: 1px solid #a5a3a0;
}

.btn.left::after {
  border-left: none;
  border-right-color: #a5a3a0;
}

.btn.right::after {
  border-right: none;
  border-left-color: #000;
}

.hscroll {
  display: flex;
  height: 15px;
  border: 1px solid #a5a3a0;
  border-radius: 3px;
}

.hscroll .thumb {
  flex: 1;
  border: 1px solid #a5a3a0;
  border-width: 0 1px;
  background: linear-gradient(#a5a3a0, #a5a3a0) calc(50% - 3px) center / 1px 5px no-repeat, linear-gradient(#a5a3a0, #a5a3a0) center center / 1px 5px no-repeat, linear-gradient(#a5a3a0, #a5a3a0) calc(50% + 3px) center / 1px 5px no-repeat, linear-gradient(#f8f7f6 50%, #edecea 50%);
}

/* footer */
.footer {
  display: grid;
  grid-template-columns: 1fr auto 1fr;
  height: 36px;
  padding: 19px 3px 0;
  line-height: 14px;
  color: #555;
  background: #e5e5e5;
  border-bottom: 1px solid #a5a5a5;
  box-shadow: 0 1px 3px #bbb;
}

.footer span:last-child {
  text-align: right;
}

.footer a {
  color: #2f62a8;
}

/* downloads */
.downloads {
  display: flex;
  align-items: center;
  gap: 10px;
  height: 47px;
  padding: 0 15px 0 2px;
  border-top: 1px solid #c4c2c0;
  background: #f2f1f0;
  font-family: "Noto Sans", sans-serif;
  font-size: 13px;
  color: #4c4c4c;
}

.download {
  display: flex;
  width: 254px;
  height: 39px;
  border: 1px solid #969492;
  border-radius: 3px;
  background: linear-gradient(#dcdcdc, #bebebe);
}

.download button {
  padding: 0;
  border: none;
  background: none;
}

.download .file {
  flex: 1;
  padding-left: 39px;
  text-align: left;
  line-height: 19px;
}

.download .more {
  display: flex;
  align-items: center;
  justify-content: center;
  width: 24px;
  margin: 3px 0;
  border-left: 1px solid #a8a8a8;
}

.more::after {
  content: "";
  border: 4px solid transparent;
  border-top: 5px solid #777;
  border-bottom: none;
}

.show-all {
  display: flex;
  align-items: center;
  gap: 14px;
  margin-left: auto;
}

.show-all a {
  color: #dd4814;
  text-decoration: underline;
}

.show-all button {
  margin-left: 3px;
}
```
